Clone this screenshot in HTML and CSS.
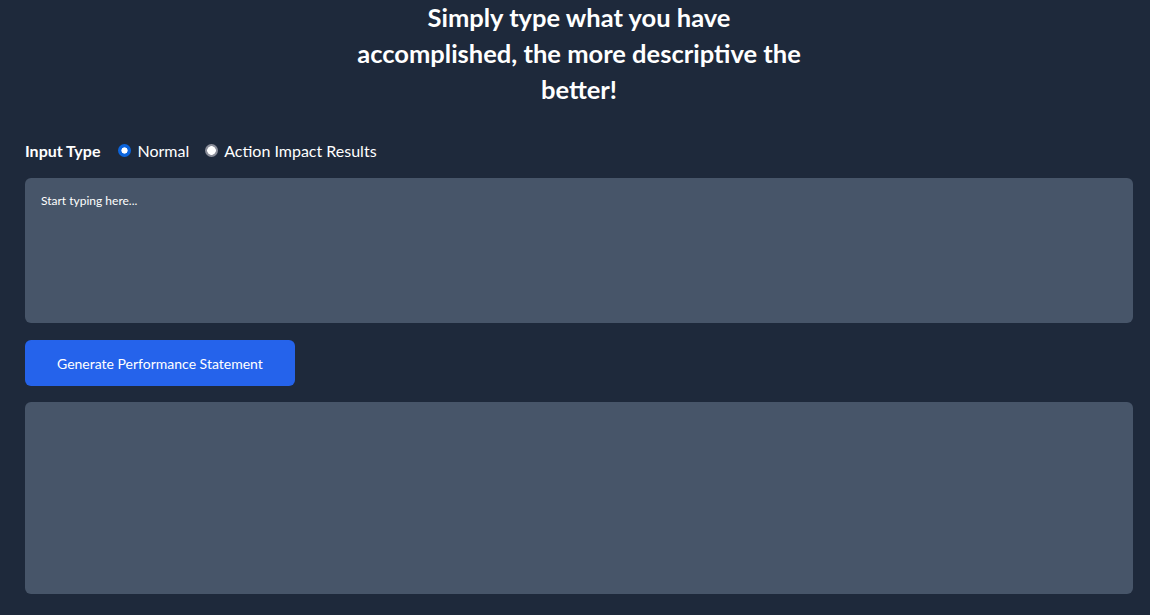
FILE: index.html
```html
<!DOCTYPE html>
<html lang="en">
<head>
<meta charset="utf-8">
<title>Performance Statement</title>
<link rel="stylesheet" href="styles.css">
</head>
<body>
<main class="page">
  <h1 class="title">Simply type what you have<br>accomplished, the more descriptive the<br>better!</h1>
  <div class="input-type">
    <span class="label">Input Type</span>
    <label class="option"><input type="radio" name="type" class="radio" checked><span>Normal</span></label>
    <label class="option"><input type="radio" name="type" class="radio"><span>Action Impact Results</span></label>
  </div>
  <textarea class="box input-box" placeholder="Start typing here..."></textarea>
  <button class="btn" type="button">Generate Performance Statement</button>
  <div class="box output-box"></div>
</main>
</body>
</html>
```
FILE: styles.css
```css
html, body {
  margin: 0;
  padding: 0;
  background: #1e293b;
}
body {
  font-family: Lato, "Noto Sans", sans-serif;
  color: #ffffff;
}
.page {
  display: flex;
  flex-direction: column;
  padding: 0 17px 21px 25px;
}
.title {
  margin: -1px auto 0;
  white-space: nowrap;
  text-align: center;
  font-size: 25.5px;
  line-height: 36px;
  font-weight: 700;
}
.input-type {
  display: flex;
  align-items: center;
  margin-top: 31px;
  height: 24px;
  font-size: 16px;
}
.label {
  font-weight: 700;
  margin-right: 18px;
}
.option {
  display: flex;
  align-items: center;
  margin-right: 16px;
}
.radio {
  appearance: none;
  -webkit-appearance: none;
  margin: 0 6px 0 0;
  width: 13px;
  height: 13px;
  border: none;
  border-radius: 50%;
  background: radial-gradient(circle, #ffffff 0 4px, #8a8d99 4.6px);
}
.radio:checked {
  background: radial-gradient(circle, #ffffff 0 2.8px, #0b64dc 3.4px);
}
.box {
  background: #475569;
  border-radius: 6px;
  border: none;
  box-sizing: border-box;
}
.input-box {
  margin-top: 16px;
  height: 145px;
  width: 100%;
  resize: none;
  padding: 15px 16px;
  font-family: inherit;
  font-size: 12px;
  color: #ffffff;
}
.input-box::placeholder {
  color: #ffffff;
  opacity: 1;
}
.btn {
  align-self: flex-start;
  margin-top: 17px;
  height: 46px;
  padding: 0 32px;
  background: #2563eb;
  color: #ffffff;
  border: none;
  border-radius: 6px;
  font-family: inherit;
  font-size: 14px;
}
.output-box {
  margin-top: 16px;
  height: 192px;
}
```
